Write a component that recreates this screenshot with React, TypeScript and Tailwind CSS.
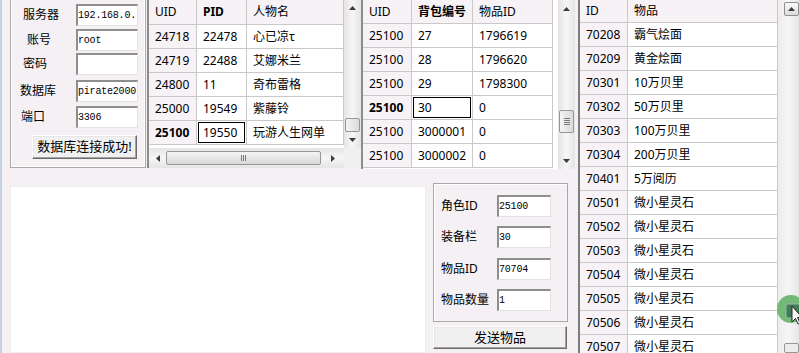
import React from "react";

// Classic WinForms-style database tool: connection box, two data grids,
// item list on the right and a small "send item" form.

const SANS = "font-['Noto_Sans','Noto_Sans_CJK_SC',sans-serif]";
const MONO = "font-['Liberation_Mono','Noto_Sans_CJK_SC',monospace]";

type Dir = "up" | "down" | "left" | "right";

function Tri({ dir }: { dir: Dir }) {
  const vert = dir === "up" || dir === "down";
  const pts = {
    up: "0,4 7,4 3.5,0",
    down: "0,0 7,0 3.5,4",
    left: "4,0 4,7 0,3.5",
    right: "0,0 0,7 4,3.5",
  }[dir];
  return (
    <svg width={vert ? 7 : 4} height={vert ? 4 : 7}>
      <polygon points={pts} fill="#3a3a3a" />
    </svg>
  );
}

function Grip({ vertical }: { vertical?: boolean }) {
  return vertical ? (
    <div className="flex flex-col gap-[1px]">
      <div className="h-px w-[6px] bg-[#7a7a7a]" />
      <div className="h-px w-[6px] bg-[#7a7a7a]" />
      <div className="h-px w-[6px] bg-[#7a7a7a]" />
      <div className="h-px w-[6px] bg-[#7a7a7a]" />
    </div>
  ) : (
    <div className="flex gap-[1px]">
      <div className="h-[6px] w-px bg-[#7a7a7a]" />
      <div className="h-[6px] w-px bg-[#7a7a7a]" />
      <div className="h-[6px] w-px bg-[#7a7a7a]" />
    </div>
  );
}

function VScroll({
  spacer,
  thumb,
  grip,
}: {
  spacer: string;
  thumb: string;
  grip?: boolean;
}) {
  return (
    <div className="flex h-full w-[17px] flex-col bg-gradient-to-r from-[#e4e4e4] via-[#f6f6f6] to-[#e4e4e4]">
      <div className="flex h-[17px] items-center justify-center">
        <Tri dir="up" />
      </div>
      <div className="flex flex-1 flex-col px-px">
        <div className={spacer} />
        <div
          className={`flex items-center justify-center rounded-[2px] border border-[#979797] bg-gradient-to-r from-[#f4f4f4] to-[#dadada] ${thumb}`}
        >
          {grip && <Grip vertical />}
        </div>
      </div>
      <div className="flex h-[17px] items-center justify-center">
        <Tri dir="down" />
      </div>
    </div>
  );
}

type Col = { w: string; head: string; bold?: boolean };

function Cell({
  w,
  h,
  tint,
  bold,
  focus,
  children,
}: {
  w: string;
  h: string;
  tint?: boolean;
  bold?: boolean;
  focus?: boolean;
  children: React.ReactNode;
}) {
  return (
    <div
      className={`${w} ${h} shrink-0 border-b border-r border-[#c9c9c9] ${
        tint ? "bg-[#f6f2f6]" : "bg-white"
      } ${focus ? "p-px" : ""}`}
    >
      <div
        className={`flex h-full items-center whitespace-nowrap text-[12px] text-black ${
          bold ? "font-bold" : ""
        } ${focus ? "border border-black pl-[4px]" : "pl-[6px]"}`}
      >
        {children}
      </div>
    </div>
  );
}

function GridBody({
  cols,
  rows,
  headH,
  boldRow,
  focusCol,
}: {
  cols: Col[];
  rows: string[][];
  headH: string;
  boldRow: number;
  focusCol: number;
}) {
  return (
    <div className="flex flex-col">
      <div className="flex">
        {cols.map((c) => (
          <Cell key={c.head} w={c.w} h={headH} tint bold={c.bold}>
            {c.head}
          </Cell>
        ))}
      </div>
      {rows.map((r, i) => (
        <div key={i} className="flex">
          {r.map((v, j) => (
            <Cell
              key={j}
              w={cols[j].w}
              h="h-[24px]"
              tint={j === 0}
              bold={j === 0 && i === boldRow}
              focus={i === boldRow && j === focusCol}
            >
              {v}
            </Cell>
          ))}
        </div>
      ))}
    </div>
  );
}

const roleCols: Col[] = [
  { w: "w-[48px]", head: "UID" },
  { w: "w-[50px]", head: "PID", bold: true },
  { w: "w-[97px]", head: "人物名" },
];
const roleRows = [
  ["24718", "22478", "心已凉τ"],
  ["24719", "22488", "艾娜米兰"],
  ["24800", "11", "奇布雷格"],
  ["25000", "19549", "紫藤铃"],
  ["25100", "19550", "玩游人生网单"],
];

const bagCols: Col[] = [
  { w: "w-[49px]", head: "UID" },
  { w: "w-[61px]", head: "背包编号", bold: true },
  { w: "w-[80px]", head: "物品ID" },
];
const bagRows = [
  ["25100", "27", "1796619"],
  ["25100", "28", "1796620"],
  ["25100", "29", "1798300"],
  ["25100", "30", "0"],
  ["25100", "3000001", "0"],
  ["25100", "3000002", "0"],
];

const items = [
  ["70208", "霸气烩面"],
  ["70209", "黄金烩面"],
  ["70301", "10万贝里"],
  ["70302", "50万贝里"],
  ["70303", "100万贝里"],
  ["70304", "200万贝里"],
  ["70401", "5万阅历"],
  ["70501", "微小星灵石"],
  ["70502", "微小星灵石"],
  ["70503", "微小星灵石"],
  ["70504", "微小星灵石"],
  ["70505", "微小星灵石"],
  ["70506", "微小星灵石"],
  ["70507", "微小星灵石"],
];

const conn = [
  { label: "服务器", pad: "pl-[12px]", mt: "mt-[4px]", value: "192.168.0." },
  { label: "账号", pad: "pl-[16px]", mt: "mt-[3px]", value: "root" },
  { label: "密码", pad: "pl-[12px]", mt: "mt-[2px]", value: "" },
  { label: "数据库", pad: "pl-[9px]", mt: "mt-[5px]", value: "pirate2000" },
  { label: "端口", pad: "pl-[10px]", mt: "mt-[4px]", value: "3306" },
];

const send = [
  { label: "角色ID", mt: "mt-[11px]", value: "25100" },
  { label: "装备栏", mt: "mt-[9px]", value: "30" },
  { label: "物品ID", mt: "mt-[10px]", value: "70704" },
  { label: "物品数量", mt: "mt-[9px]", value: "1" },
];

const inputCls =
  "flex items-center overflow-hidden whitespace-nowrap bg-white border-t-2 border-l-2 border-b border-r border-t-[#8e8e8e] border-l-[#8e8e8e] border-b-[#e2e2e2] border-r-[#e2e2e2] text-[10px] tracking-[-0.2px] text-black";

const buttonCls =
  "flex items-center justify-center bg-[#f0f0f0] border border-t-white border-l-white border-b-[#6b6b6b] border-r-[#6b6b6b] shadow-[inset_-1px_-1px_0_#a3a3a3,inset_1px_1px_0_#e6e6e6] text-[13px] text-black";

function CursorBadge() {
  return (
    <div className="absolute left-[774px] top-[294px]">
      <svg width="30" height="36" viewBox="0 0 30 36">
        <circle cx="15" cy="15" r="14" fill="#67b36d" opacity="0.92" />
        <rect x="10" y="10" width="15" height="14" rx="2" fill="#3f7d56" stroke="#9ab8a4" strokeWidth="1" />
        <path
          d="M16 12 L16 28 L19.5 24.5 L22 30 L24 29 L21.5 23.5 L26 23.5 Z"
          fill="#ffffff"
          stroke="#222222"
          strokeWidth="1"
          strokeLinejoin="round"
        />
      </svg>
    </div>
  );
}

export default function App() {
  return (
    <div
      className={`relative flex h-[353px] w-[799px] overflow-hidden border-l-2 border-[#c6d1e6] bg-[#f4f0f4] ${SANS}`}
    >
      {/* left part: connection, role grid, bag grid, bottom log + send form */}
      <div className="flex w-[575px] shrink-0 flex-col">
        <div className="flex h-[170px]">
          {/* connection groupbox */}
          <div className="w-[145px] shrink-0 pl-[8px]">
            <div className="flex h-[168px] w-[136px] flex-col border-x border-b border-[#a9a9a9] shadow-[inset_1px_0_0_#fff,inset_-1px_-1px_0_#fff]">
              {conn.map((c) => (
                <div key={c.label} className={`flex h-[22px] items-center ${c.mt}`}>
                  <div className={`w-[65px] shrink-0 text-[12px] text-black ${c.pad}`}>{c.label}</div>
                  <div className={`h-[22px] w-[62px] ${inputCls} ${MONO}`}>{c.value}</div>
                </div>
              ))}
              <div className={`ml-[21px] mt-[7px] h-[24px] w-[105px] ${buttonCls}`}>数据库连接成功!</div>
            </div>
          </div>

          {/* role grid */}
          <div className="flex h-[168px] w-[214px] shrink-0 flex-col border-l-2 border-[#8c8c8c]">
            <div className="flex h-[148px]">
              <div className="w-[195px] bg-white">
                <GridBody cols={roleCols} rows={roleRows} headH="h-[25px]" boldRow={4} focusCol={1} />
              </div>
              <VScroll spacer="h-[102px]" thumb="h-[14px]" />
            </div>
            <div className="flex h-[20px]">
              <div className="flex w-[195px] items-center bg-gradient-to-b from-[#e4e4e4] via-[#f6f6f6] to-[#e4e4e4]">
                <div className="flex w-[17px] justify-center">
                  <Tri dir="left" />
                </div>
                <div className="flex h-[14px] w-[155px] items-center justify-center rounded-[2px] border border-[#979797] bg-gradient-to-b from-[#f4f4f4] to-[#d8d8d8]">
                  <Grip />
                </div>
                <div className="flex flex-1 justify-center">
                  <Tri dir="right" />
                </div>
              </div>
              <div className="w-[17px] bg-[#f0f0f0]" />
            </div>
          </div>

          {/* bag grid */}
          <div className="flex h-[169px] w-[216px] shrink-0 border-l-2 border-[#8c8c8c]">
            <div className="flex w-[195px] bg-white">
              <GridBody cols={bagCols} rows={bagRows} headH="h-[24px]" boldRow={3} focusCol={1} />
            </div>
            <VScroll spacer="h-[93px]" thumb="h-[23px]" grip />
            <div className="w-[2px]" />
          </div>
        </div>

        <div className="flex flex-1">
          <div className="ml-[8px] mt-[16px] w-[416px] border border-[#efebef] bg-white" />
          <div className="flex flex-col pl-[7px] pt-[13px]">
            <div className="flex h-[139px] w-[135px] flex-col border border-[#a9a9a9] shadow-[inset_1px_1px_0_#fff]">
              {send.map((s) => (
                <div key={s.label} className={`flex h-[22px] items-center ${s.mt}`}>
                  <div className="w-[63px] shrink-0 pl-[7px] text-[12px] text-black">{s.label}</div>
                  <div className={`h-[22px] w-[54px] ${inputCls} ${MONO}`}>{s.value}</div>
                </div>
              ))}
            </div>
            <div className={`mt-[4px] h-[23px] w-[134px] ${buttonCls}`}>发送物品</div>
          </div>
        </div>
      </div>

      {/* item list */}
      <div className="flex w-[222px] shrink-0 pl-px">
        <div className="flex h-full border-l-2 border-[#7c7c7c] bg-white">
          <div className="flex flex-col">
            <div className="flex">
              <Cell w="w-[48px]" h="h-[23px]" tint>
                ID
              </Cell>
              <Cell w="w-[150px]" h="h-[23px]" tint>
                物品
              </Cell>
            </div>
            {items.map(([id, name]) => (
              <div key={id} className="flex">
                <Cell w="w-[48px]" h="h-[24px]" tint>
                  {id}
                </Cell>
                <Cell w="w-[150px]" h="h-[24px]">
                  {name}
                </Cell>
              </div>
            ))}
          </div>
          <div className="flex w-[21px] flex-col bg-gradient-to-r from-[#ececec] via-[#f6f6f6] to-[#e6e6e6] pl-[6px] pt-[2px]">
            <div className="flex h-[14px] w-[15px] items-center justify-center rounded-[2px] border border-[#8f8f8f] bg-gradient-to-b from-[#fafafa] to-[#dcdcdc]">
              <Tri dir="up" />
            </div>
            <div className="h-[330px]" />
            <div className="h-[10px] w-[15px] rounded-[2px] border border-[#979797] bg-[#ececec]" />
          </div>
        </div>
      </div>

      <CursorBadge />
    </div>
  );
}
